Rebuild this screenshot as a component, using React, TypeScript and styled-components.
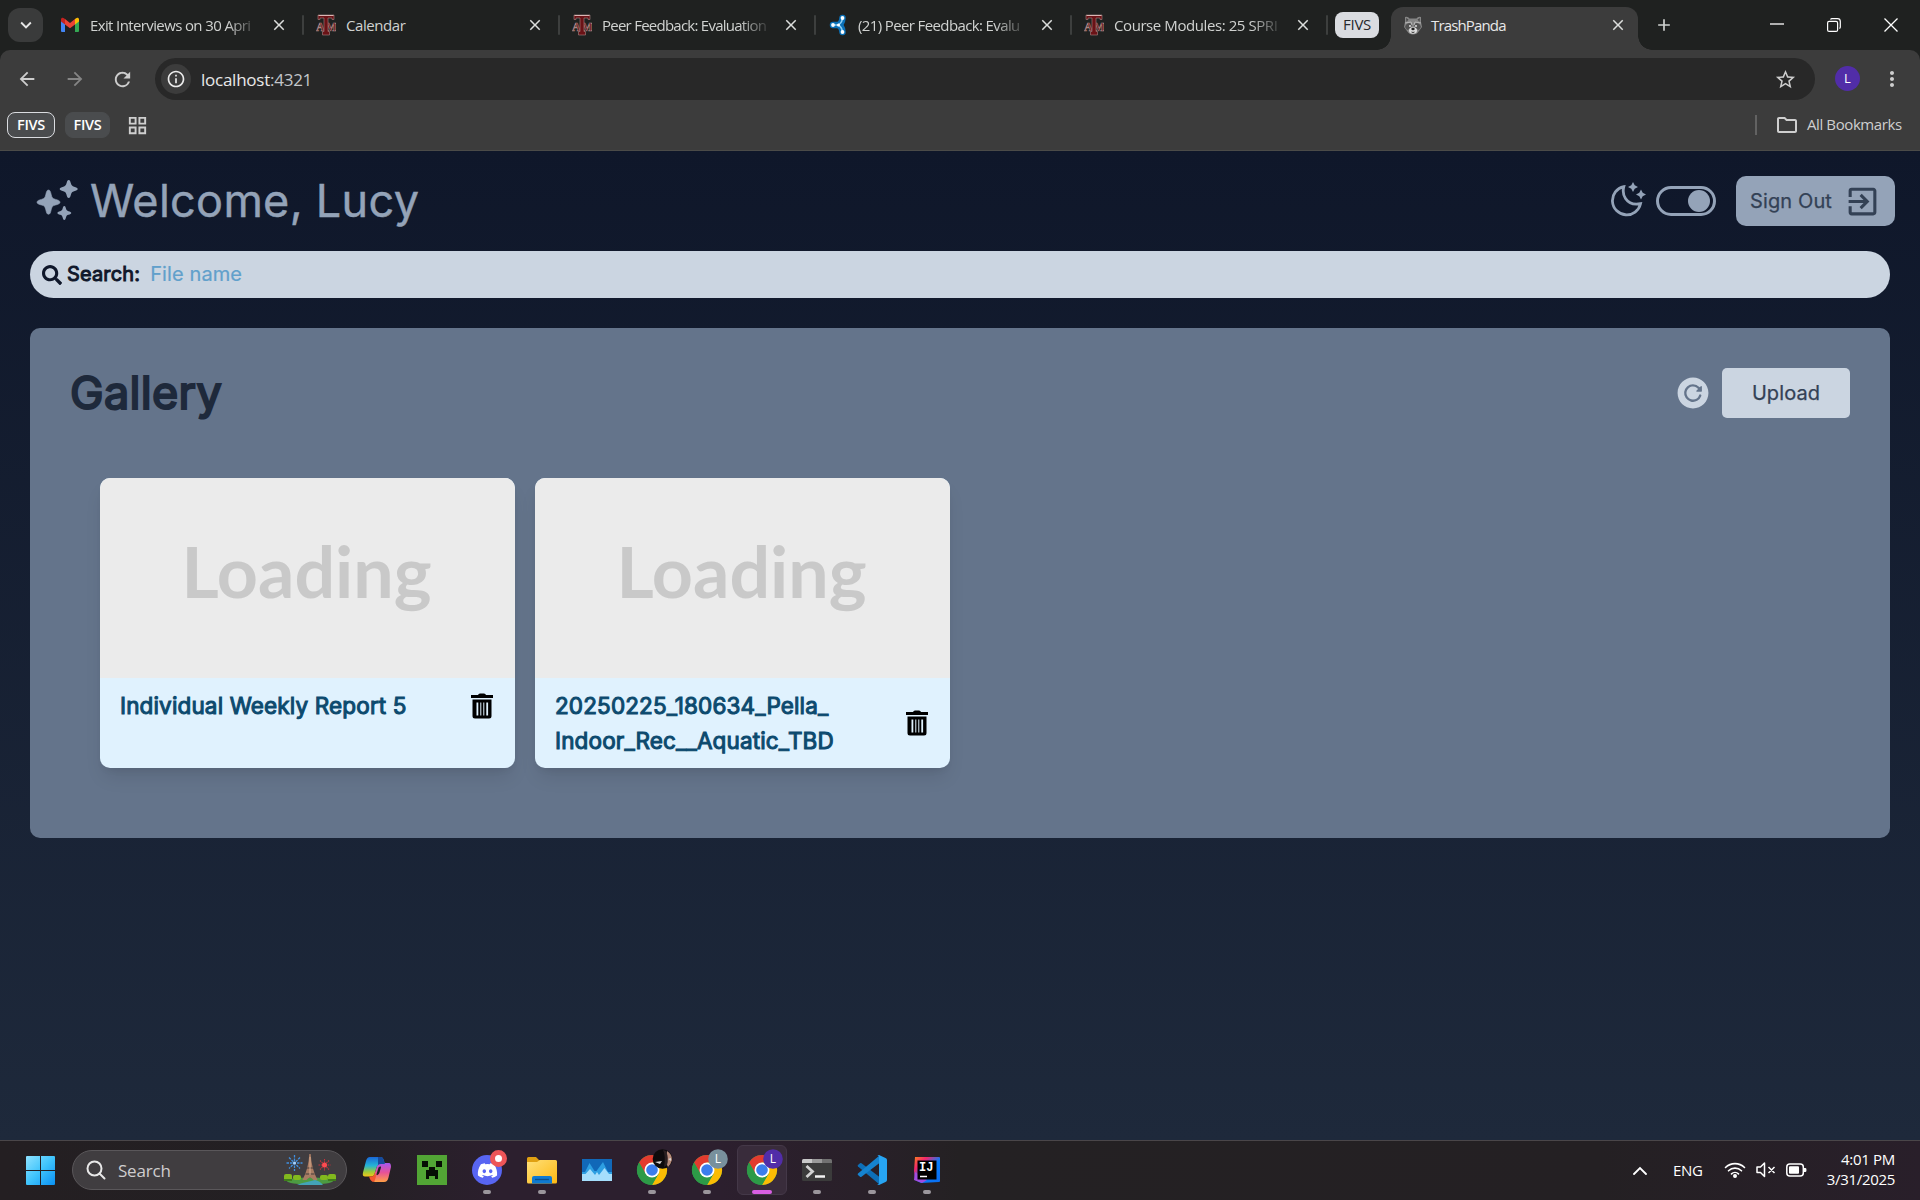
import React from "react";
import styled, { createGlobalStyle, css } from "styled-components";
import { MdArrowBack, MdArrowForward, MdRefresh, MdInfoOutline, MdStarOutline, MdOutlineFolder, MdGridView, MdExitToApp, MdKeyboardArrowDown, MdClose, MdAdd, MdMoreVert } from "react-icons/md";
import { FaSearch, FaDiscord } from "react-icons/fa";
import { IoReloadCircle } from "react-icons/io5";

const ui = `"Open Sans", "Noto Sans", sans-serif`;

const GlobalStyle = createGlobalStyle`
  *, *::before, *::after { box-sizing: border-box; }
  body { margin: 0; background: #0f172a; overflow: hidden; }
  svg { display: block; flex: none; }
  button { border: 0; padding: 0; background: none; color: inherit; font: inherit; }
`;

const Screen = styled.div`
  display: flex;
  flex-direction: column;
  width: 1920px;
  height: 1200px;
  overflow: hidden;
  font-family: ${ui};
`;

/* ---------- browser chrome ---------- */

const TabStrip = styled.div`
  display: flex;
  height: 50px;
  background: #1f2120;
  color: #d0d2d0;
`;

const TabSearch = styled.button`
  display: grid;
  place-items: center;
  width: 35px;
  height: 34px;
  margin: 8px 5px 0 8px;
  border-radius: 12px;
  background: #3a3b3b;
  color: #e6e6e6;
`;

const TabItem = styled.div`
  display: flex;
  align-items: center;
  width: 256px;
  height: 50px;
  padding-left: 12px;
`;

const TabLabel = styled.span<{ $fade?: boolean; $spacing?: number }>`
  flex: 1;
  margin-left: 10px;
  font-size: 15px;
  line-height: 20px;
  letter-spacing: ${(p) => p.$spacing ?? -0.4}px;
  white-space: nowrap;
  ${(p) => p.$fade && css`mask-image: linear-gradient(90deg, #000 82%, rgba(0, 0, 0, 0.15) 99%);`}
`;

const TabClose = styled.button`
  display: grid;
  place-items: center;
  width: 20px;
  height: 20px;
  margin: 0 13px 0 12px;
  color: #dcdedc;
`;

const TabDivider = styled.i`
  width: 2px;
  height: 20px;
  margin-top: -1px;
  border-radius: 1px;
  background: #3d3f3e;
`;

const GroupChip = styled.span`
  width: 44px;
  height: 26px;
  margin: 12px 12px 0 7px;
  border-radius: 8px;
  background: #dadce0;
  color: #26282b;
  font-size: 15px;
  line-height: 25px;
  text-align: center;
  letter-spacing: -0.3px;
`;

const ActiveTab = styled.div`
  position: relative;
  display: flex;
  align-items: center;
  width: 247px;
  height: 43px;
  margin-top: 7px;
  padding: 0 0 7px 13px;
  border-radius: 12px 12px 0 0;
  background: #3c3c3c;
  color: #e8e8e8;

  &::before,
  &::after {
    content: "";
    position: absolute;
    bottom: 0;
    width: 14px;
    height: 14px;
  }
  &::before {
    left: -14px;
    background: radial-gradient(circle at 0 0, transparent 13.5px, #3c3c3c 14px);
  }
  &::after {
    right: -14px;
    background: radial-gradient(circle at 100% 0, transparent 13.5px, #3c3c3c 14px);
  }
`;

const ActiveLabel = styled(TabLabel)`
  margin-left: 9px;
`;

const ActiveClose = styled(TabClose)`
  margin: 0 10px 0 8px;
`;

const NewTab = styled.button`
  display: grid;
  place-items: center;
  width: 34px;
  height: 34px;
  margin: 8px 0 0 9px;
`;

const WindowControls = styled.div`
  display: flex;
  margin: 0 1px 0 auto;
  height: 49px;
  color: #fff;
`;

const WindowButton = styled.button`
  display: grid;
  place-items: center;
  width: 57px;
`;

const ToolbarBack = styled.div`
  background: #1f2120;
`;

const Toolbar = styled.div`
  display: flex;
  flex-direction: column;
  height: 101px;
  border-bottom: 1px solid #4b4b48;
  border-radius: 10px 10px 0 0;
  background: #3c3c3c;
`;

const NavRow = styled.div`
  display: flex;
  align-items: center;
  height: 58px;
  padding-left: 16px;
  color: #cdcdcd;
`;

const NavButton = styled.button<{ $dim?: boolean; $gap: number }>`
  width: 22px;
  height: 22px;
  margin-right: ${(p) => p.$gap}px;
  color: ${(p) => (p.$dim ? "#858585" : "#cdcdcd")};
`;

const AddressBar = styled.div`
  display: flex;
  align-items: center;
  width: 1660px;
  height: 42px;
  padding: 0 18px 0 6px;
  border-radius: 21px;
  background: #282828;
`;

const SiteInfo = styled.span`
  display: grid;
  place-items: center;
  width: 30px;
  height: 30px;
  margin-right: 10px;
  border-radius: 50%;
  background: #3c3c3c;
  color: #ececec;
`;

const Address = styled.span`
  flex: 1;
  color: #e8e8e8;
  font-size: 17px;
  letter-spacing: -0.25px;
  b { font-weight: 400; color: #c3c6ca; }
`;

const Profile = styled.span`
  width: 25px;
  height: 25px;
  margin: 0 20px 1px 20px;
  border-radius: 50%;
  background: #512da8;
  color: #fff;
  font-size: 13px;
  line-height: 25px;
  text-align: center;
`;

const BookmarkRow = styled.div`
  display: flex;
  align-items: center;
  height: 34px;
  padding: 0 19px 0 7px;
  color: #cfcfcf;
`;

const BookmarkChip = styled.span<{ $outlined?: boolean }>`
  width: ${(p) => (p.$outlined ? 48 : 45)}px;
  height: 26px;
  margin-right: ${(p) => (p.$outlined ? 10 : 16)}px;
  border: 1px solid ${(p) => (p.$outlined ? "#dadce0" : "#4a4c4e")};
  border-radius: 8px;
  background: #4a4c4e;
  color: #fff;
  font-size: 14.5px;
  font-weight: 600;
  line-height: 24px;
  letter-spacing: -0.3px;
  text-align: center;
`;

const BookmarkDivider = styled.i`
  width: 2px;
  height: 20px;
  margin: 0 18px 0 auto;
  background: #626262;
`;

const AllBookmarks = styled.span`
  width: 94px;
  margin: 0 0 2px 8px;
  font-size: 15px;
  letter-spacing: -0.4px;
  white-space: nowrap;
`;

/* ---------- page ---------- */

const Page = styled.main`
  flex: 1;
  padding: 25px 25px 0 30px;
  background: linear-gradient(180deg, #0f172a, #1e293b);
  font-family: Inter, sans-serif;
`;

const Header = styled.header`
  display: flex;
  align-items: center;
  height: 50px;
  color: #94a3b8;
`;

const Greeting = styled.h1`
  margin: 0 auto 0 6px;
  font-size: 45px;
  font-weight: 400;
  line-height: 50px;
  letter-spacing: 0.3px;
  -webkit-text-stroke: 0.45px currentColor;
`;

const Toggle = styled.span`
  display: flex;
  align-items: center;
  justify-content: flex-end;
  width: 60px;
  height: 30px;
  margin: 0 20px 0 8px;
  padding-right: 3px;
  border: 3px solid #94a3b8;
  border-radius: 15px;
  &::after {
    content: "";
    width: 22px;
    height: 22px;
    border-radius: 50%;
    background: #94a3b8;
  }
`;

const SignOut = styled.button`
  display: flex;
  align-items: center;
  justify-content: space-between;
  width: 159px;
  height: 50px;
  padding: 0 14px 0 14px;
  border-radius: 10px;
  background: #94a3b8;
  color: #334155;
  font-size: 20px;
  letter-spacing: 0.12px;
  -webkit-text-stroke: 0.25px currentColor;
`;

const SearchBar = styled.label`
  display: flex;
  align-items: center;
  height: 47px;
  margin: 25px 5px 30px 0;
  padding-left: 12px;
  border-radius: 24px;
  background: #cbd5e1;
  color: #0f172a;
  font-size: 20px;
`;

const SearchLabel = styled.span`
  margin: 0 10px 2px 5px;
  letter-spacing: 0.15px;
  -webkit-text-stroke: 0.95px currentColor;
`;

const Placeholder = styled.span`
  margin-bottom: 2px;
  color: #61a0cb;
  letter-spacing: 0.1px;
  -webkit-text-stroke: 0.2px currentColor;
`;

const GalleryPanel = styled.section`
  height: 510px;
  margin-right: 5px;
  padding: 40px 40px 0;
  border-radius: 10px;
  background: #64748b;
`;

const GalleryHead = styled.div`
  display: flex;
  align-items: center;
  height: 50px;
`;

const GalleryTitle = styled.h2`
  margin: 0 auto 0 0;
  color: #1e293b;
  font-size: 45px;
  font-weight: 400;
  line-height: 50px;
  letter-spacing: 0.35px;
  -webkit-text-stroke: 2.1px currentColor;
`;

const RefreshButton = styled.button`
  margin-right: 10px;
  color: #cbd5e1;
`;

const UploadButton = styled.button`
  width: 128px;
  height: 50px;
  border-radius: 5px;
  background: #cbd5e1;
  color: #334155;
  font-size: 20px;
  letter-spacing: 0.1px;
  -webkit-text-stroke: 0.25px currentColor;
`;

const CardGrid = styled.div`
  display: grid;
  grid-template-columns: 415px 415px;
  gap: 20px;
  margin: 60px 0 0 30px;
`;

const Card = styled.article`
  height: 290px;
  border-radius: 10px;
  overflow: hidden;
  background: #e0f2fe;
  box-shadow: 0 12px 19px -4px rgba(0, 0, 0, 0.1), 0 5px 8px -5px rgba(0, 0, 0, 0.1);
`;

const Preview = styled.div`
  height: 200px;
  padding-right: 2px;
  background: #ebebeb;
  color: #c9c9c9;
  font: 700 71.7px/185px Lato, sans-serif;
  text-align: center;
`;

const CardInfo = styled.div`
  display: flex;
  align-items: center;
  justify-content: space-between;
  padding: 10px 21px 0 20px;
`;

const FileName = styled.h3`
  margin: 0;
  color: #0c4a6e;
  font-size: 22.5px;
  font-weight: 400;
  line-height: 35px;
  letter-spacing: 0.14px;
  white-space: pre-line;
  -webkit-text-stroke: 1.05px currentColor;
`;

/* ---------- taskbar ---------- */

const Taskbar = styled.footer`
  display: flex;
  align-items: center;
  height: 60px;
  padding: 0 25px 1px 26px;
  border-top: 1px solid #4a4649;
  background: linear-gradient(90deg, #241f22 0, #232023 350px, #2c1f2e 500px, #2c1f2e 720px, #292029 860px, #242123 960px, #242023 1600px, #291f2a 1920px);
  color: #fff;
`;

const TaskSearch = styled.div`
  display: flex;
  align-items: center;
  width: 275px;
  height: 40px;
  margin: 0 5px 0 17px;
  padding: 0 9px 0 13px;
  border: 1px solid #5a575a;
  border-radius: 20px;
  background: #403d40;
  color: #cfcdcf;
  font-size: 17px;
  letter-spacing: -0.2px;
`;

const TaskSearchText = styled.span`
  flex: 1;
  margin-left: 12px;
`;

const AppRow = styled.div`
  display: flex;
  gap: 5px;
`;

const AppSlot = styled.div<{ $active?: boolean }>`
  display: flex;
  flex-direction: column;
  align-items: center;
  width: 50px;
  height: 50px;
  padding-top: 5px;
  border: 1px solid ${(p) => (p.$active ? "#443848" : "transparent")};
  border-radius: 6px;
  background: ${(p) => (p.$active ? "#392c3b" : "transparent")};
`;

const AppGlyph = styled.div`
  height: 40px;
  padding-top: 3px;
`;

const RunningMark = styled.i<{ $active?: boolean }>`
  width: ${(p) => (p.$active ? 20 : 8)}px;
  height: 4px;
  margin-top: 1px;
  border-radius: 2px;
  background: ${(p) => (p.$active ? "#d85fe2" : "#9b969c")};
`;

const Tray = styled.div`
  display: flex;
  align-items: center;
  gap: 10px;
  margin-left: auto;
`;

const Language = styled.span`
  width: 30px;
  margin: 0 11px 1px 16px;
  font-size: 15px;
  letter-spacing: -0.3px;
`;

const Clock = styled.div`
  width: 69px;
  margin: 0 0 3px 9px;
  font-size: 15px;
  line-height: 20px;
  letter-spacing: -0.3px;
  text-align: right;
  white-space: nowrap;
`;

/* ---------- icons ---------- */

const GmailIcon = () => (
  <svg width="20" height="16" viewBox="0 0 20 16">
    <path d="M1 2v12q0 1 1 1h3V5z" fill="#4285f4" />
    <path d="M15 5v10h3q1 0 1-1V2z" fill="#34a853" />
    <path d="M1 4V2.500C1 .6 3 .5 4.300 1.500L5 2v5.500L1 4.600z" fill="#c5221f" />
    <path d="M15 7.500V2l.7-.5C17 .5 19 .6 19 2.500v2.100z" fill="#fbbc04" />
    <path d="M5 2l5 3.900L15 2v5.500l-5 3.800-5-3.800z" fill="#ea4335" />
  </svg>
);

const CampusIcon = () => (
  <svg width="20" height="22" viewBox="0 0 20 22" fontFamily="Liberation Serif" fontWeight="700" textAnchor="middle">
    <g fill="#6a1216" stroke="#a98584" strokeWidth=".6">
      <text x="4.200" y="17" fontSize="12">A</text>
      <text x="15.300" y="17" fontSize="11.500">M</text>
      <path d="M2 1h16v4.500h-2V4h-4v13.500h1.500V21h-7v-3.500H8V4H4v1.500H2z" />
    </g>
    <path d="M2.500 1.500h15" stroke="#d9b7b5" />
  </svg>
);

const NodesIcon = () => (
  <svg width="20" height="22" viewBox="-1 0 20 22">
    <g stroke="#0b70b7" strokeWidth="6.500" strokeLinecap="round" fill="none">
      <path d="M4 11h5M9 11q4-1 4.500-7M9 11q4 1 4.500 7" />
    </g>
    <path d="M4 11h5q4-2 4.500-7M9 11q4 2 4.500 7" stroke="#8fd0f5" strokeWidth="1.500" fill="none" />
    <g fill="#fff"><circle cx="4" cy="11" r="1.900" /><circle cx="13.500" cy="4" r="1.900" /><circle cx="13.500" cy="18" r="1.900" /><circle cx="9.500" cy="11" r="1.500" /></g>
  </svg>
);

const RaccoonIcon = () => (
  <svg width="18" height="19" viewBox="0 0 18 19">
    <path d="M1 1q3-1 4.500 1.500h7Q14 0 17 1v5l1 5-3 4q-2 3.500-6 3.500T3 15l-3-4 1-5z" fill="#858585" />
    <path d="M2 2l2.500 1.500L2.500 6zM16 2l-2.500 1.500L15.500 6z" fill="#4b4b4b" />
    <path d="M1 11q1-4 5-4l2 2-2 4-3 1zM17 11q-1-4-5-4l-2 2 2 4 3 1z" fill="#515151" />
    <path d="M1 7l6-1 1 3M17 7l-6-1-1 3" stroke="#b5b5b5" fill="none" />
    <circle cx="6" cy="10" r=".9" fill="#eee" /><circle cx="12" cy="10" r=".9" fill="#eee" />
    <ellipse cx="9" cy="14.500" rx="4" ry="3.200" fill="#dcdcdc" /><ellipse cx="9" cy="13" rx="1.700" ry="1.200" fill="#222" />
    <path d="M7.500 16q1.500 1 3 0" stroke="#333" fill="none" />
  </svg>
);

const SparklesIcon = () => (
  <svg width="54" height="50" viewBox="0 0 54 50" fill="#94a3b8">
    <path d="M18.500 14C20 14 20.500 15.500 21.200 18.500 21.900 21.500 22.500 22.600 25.600 23.400 28.500 24.200 30 24.800 30 26.200 30 27.600 28.500 28.200 25.600 29 22.500 29.700 21.900 30.800 21.200 33.800 20.500 36.800 20 38.300 18.500 38.300 17 38.300 16.500 36.800 15.800 33.800 15.100 30.800 14.500 29.700 11.400 29 8.500 28.200 7 27.600 7 26.200 7 24.800 8.500 24.200 11.400 23.400 14.500 22.600 15.100 21.500 15.800 18.500 16.500 15.500 17 14 18.500 14z" stroke="#94a3b8" strokeWidth=".6" />
    <path transform="translate(38.700 13) scale(.75)" d="M0-12C1.800-12 2.200-10 3-7.200 3.800-4.700 4.700-3.800 7.200-3 10-2.200 12-1.600 12 0S10 2.200 7.200 3C4.700 3.800 3.800 4.700 3 7.200 2.200 10 1.800 12 0 12S-2.200 10-3 7.200C-3.800 4.700-4.700 3.800-7.200 3-10 2.200-12 1.600-12 0S-10-2.200-7.200-3C-4.700-3.800-3.800-4.700-3-7.200-2.200-10-1.800-12 0-12z" />
    <path transform="translate(34.300 37) scale(.58)" d="M0-12C1.800-12 2.200-10 3-7.200 3.800-4.700 4.700-3.800 7.200-3 10-2.200 12-1.600 12 0S10 2.200 7.200 3C4.700 3.800 3.800 4.700 3 7.200 2.200 10 1.800 12 0 12S-2.200 10-3 7.200C-3.800 4.700-4.700 3.800-7.200 3-10 2.200-12 1.600-12 0S-10-2.200-7.200-3C-4.700-3.800-3.800-4.700-3-7.200-2.200-10-1.800-12 0-12z" />
  </svg>
);

const MoonIcon = () => (
  <svg width="37" height="50" viewBox="0 0 37 50">
    <path d="M12.800 10.700A14.200 14.200 0 1 0 29.500 27.700C23 29 17.500 27 14.500 22.500 12 18.800 11.700 15 12.800 10.700z" fill="none" stroke="#94a3b8" strokeWidth="2.800" />
    <path d="M22 6l1.700 3.300L27 11l-3.300 1.700L22 16l-1.700-3.300L17 11l3.300-1.700zM30 13.500l1.700 3.300 3.300 1.700-3.300 1.700-1.700 3.300-1.700-3.300-3.300-1.700 3.300-1.700z" fill="#94a3b8" />
  </svg>
);

const TrashIcon = () => (
  <svg width="24" height="26" viewBox="0 0 24 26">
    <path d="M1 2h7q.5-1.500 2-1.500h4q1.500 0 2 1.500h7v3H1z" />
    <path fillRule="evenodd" d="M2.500 6.500h19V23q0 2.500-2.500 2.500H5Q2.500 25.500 2.500 23zM6.500 9.500v13h1.800v-13zm3.800 0v13h1v-13zm3 0v13h1v-13zm3 0v13h1.800v-13z" />
  </svg>
);

const WindowsIcon = () => (
  <svg width="29" height="29" viewBox="0 0 29 29">
    <defs><linearGradient id="win" x2="1" y2="1"><stop stopColor="#8fe2ff" /><stop offset=".5" stopColor="#3fc4fc" /><stop offset="1" stopColor="#0a90f3" /></linearGradient></defs>
    <path d="M1 0h13v14H0V1q0-1 1-1zM15 0h13q1 0 1 1v13H15zM0 15h14v14H1q-1 0-1-1zM15 15h14v13q0 1-1 1H15z" fill="url(#win)" />
  </svg>
);

const ParisIcon = () => (
  <svg width="54" height="32" viewBox="0 0 54 32">
    <ellipse cx="27" cy="27" rx="23" ry="3.500" fill="#4d9b42" />
    <path d="M24 28q-6 1-10 3h26q-3-4-8-5z" fill="#43a3b7" />
    <g fill="#82b91e"><rect x="1" y="20" width="8" height="7" rx="2" /><rect x="10" y="21" width="8" height="5" rx="2" /><rect x="37" y="21" width="8" height="5" rx="2" /><rect x="45" y="20" width="8" height="7" rx="2" /></g>
    <path d="M1 25h8v2H1zM45 25h8v2h-8z" fill="#3f7d1b" />
    <path d="M26.300 0h1.400q.6 14 6.800 26h-4q-3.500-5-7 0h-4Q25.700 14 26.300 0z" fill="#a97c63" />
    <path d="M24 14h6M22.500 20h9" stroke="#66514a" strokeWidth="1.500" /><path d="M27 3v18" stroke="#d9ad90" strokeWidth="1" />
    <g stroke="#3f8fe0" strokeWidth="1.300" strokeDasharray="2.500 1"><path d="M11.500 1v16M3.500 9h16M6 3.500l11 11M17 3.500l-11 11" /></g>
    <circle cx="11.500" cy="9" r="1.500" fill="#a9d4ff" />
    <path d="M41.500 5v12M35.500 11h12M37 6.500l9 9M46 6.500l-9 9" stroke="#c9323b" strokeWidth="1.100" strokeDasharray="1.500 .8" /><circle cx="41.500" cy="11" r="2.500" fill="#ff4a50" />
  </svg>
);

const CopilotIcon = () => (
  <svg width="30" height="32" viewBox="0 0 30 32">
    <defs>
      <linearGradient id="cpA" x2="0" y2="1"><stop stopColor="#1a67d8" /><stop offset=".45" stopColor="#25b4d6" /><stop offset=".75" stopColor="#9acb3c" /><stop offset="1" stopColor="#f5c518" /></linearGradient>
      <linearGradient id="cpB" x2="0" y2="1"><stop stopColor="#a557f0" /><stop offset=".5" stopColor="#e75298" /><stop offset="1" stopColor="#ff9f45" /></linearGradient>
    </defs>
    <path fillRule="evenodd" d="M19 9h8q2 0 2 4l-2.500 10.500Q25.500 28 22 28h-9q-2 0-2-3L15 12q1-3 4-3zM16.500 13.500L14.500 20q-.3 1.500 1 1 1.500-.6 2-2.500l1.500-5q.3-1.500-1-1-1 .3-1.500 1z" fill="url(#cpB)" />
    <path d="M8 3h11q2 0 3 4l.8 3H18q-2.500 0-3.500 3.500L12.500 20q-.8 2.500-3 2.500H3q-3 0-2-4L4 7q1-4 4-4z" fill="url(#cpA)" />
    <path d="M7 22.500h2.500q2.200 0 3-2.500l.5-1.500 1 3.500-1 4q-.6 2-2 2-2.500-.8-4-5.500z" fill="#f4572e" />
    <path d="M16 3h3q2 0 3 4l.8 3H19q-2 0-3 1z" fill="#174b9d" />
  </svg>
);

const CreeperIcon = () => (
  <svg width="30" height="32" viewBox="0 0 30 32">
    <path d="M0 1h30v30H0z" fill="#52a535" />
    <path d="M5 7h6v6H5zM19 7h6v6h-6zM12 13h6v3h3v9h-3v-3h-6v3H9v-9h3z" fill="#060d04" />
  </svg>
);

const DiscordBubble = styled.span`
  position: relative;
  display: grid;
  place-items: center;
  width: 30px;
  height: 30px;
  margin: 1px 0;
  border-radius: 50%;
  background: #5865f2;
  color: #fff;
  &::after {
    content: "";
    position: absolute;
    top: -5px;
    right: -5px;
    width: 17px;
    height: 17px;
    border: 5px solid #ed5558;
    border-radius: 50%;
    background: #fff;
  }
`;

const FolderIcon = () => (
  <svg width="30" height="32" viewBox="0 0 30 32">
    <defs><linearGradient id="fold" x2="1" y2="1"><stop stopColor="#ffe07a" /><stop offset="1" stopColor="#fdb912" /></linearGradient></defs>
    <path d="M0 4.500Q0 3 1.500 3H9l3 3h1v6H0z" fill="#e0a012" />
    <path d="M0 8h10l3-2h15.500Q30 6 30 7.500V28q0 1.500-1.500 1.500h-27Q0 29.500 0 28z" fill="url(#fold)" />
    <path d="M5 29.500V24q0-2 2-2h16q2 0 2 2v5.500z" fill="#0f7ad1" /><path d="M8 25.500h14" stroke="#0b4f8c" strokeWidth="1.300" />
  </svg>
);

const MonitorIcon = () => (
  <svg width="30" height="32" viewBox="0 0 30 32">
    <path d="M0 5h30v22H0z" fill="#1168b8" />
    <path d="M0 18h3l4.500-9 5 8 2 0 6.500-9 5 10h4v9H0z" fill="#2d9fe2" />
    <path d="M0 20h3.500l4.500-5 5 6 2-3 2 3 5.500-7L27 20h3v7H0z" fill="#a5defc" />
  </svg>
);

const BadgeText = styled.text`
  font-family: ${ui};
  font-size: 12px;
  fill: #fff;
`;

const BadgedSvg = styled.svg`
  margin-top: -6px;
`;

const ChromeIcon = ({ badge }: { badge: "photo" | "grey" | "purple" }) => (
  <BadgedSvg width="44" height="38" viewBox="-7 -6 44 38">
    <circle cx="15" cy="16" r="15" fill="#34a853" />
    <path d="M2 8.500A15 15 0 0 1 28 8.500H15L8.500 19.800z" fill="#e33b2e" />
    <path d="M28 8.500A15 15 0 0 1 15 31L21.500 19.800 15 8.500z" fill="#fbbc04" />
    <path d="M2 8.500A15 15 0 0 0 15 31L21.500 19.800 8.500 19.800z" fill="#2d9a47" />
    <circle cx="15" cy="16" r="7.500" fill="#fff" /><circle cx="15" cy="16" r="5.800" fill="#3b7ded" />
    {badge === "photo" ? (
      <g>
        <circle cx="25.500" cy="5" r="9.800" fill="#0d0b0c" />
        <path d="M30-3q5 3 5 9-1 4-4 7-2-3-2-8z" fill="#b58a78" />
        <path d="M31 5l3-1v3zM18 8l7-1-2 3z" fill="#d8d3d2" /><path d="M26-4q3 6 1 17l3-2q2-7-1-14z" fill="#2a2021" />
      </g>
    ) : (
      <g>
        <circle cx="26" cy="5" r="9.800" fill={badge === "grey" ? "#78909c" : "#512da8"} />
        <BadgeText x="26" y="9.300" textAnchor="middle">L</BadgeText>
      </g>
    )}
  </BadgedSvg>
);

const TerminalIcon = () => (
  <svg width="30" height="32" viewBox="0 0 30 32">
    <rect y="5" width="30" height="22" rx="1.500" fill="#3b3b3b" />
    <path d="M0 9V6.500Q0 5 1.500 5H10v4z" fill="#c9c9c9" /><path d="M10 5h10v4H10z" fill="#9a9a9a" /><path d="M20 5h8.500Q30 5 30 6.500V9H20z" fill="#717171" />
    <path d="M4.500 12l6 5.500-6 5.500" stroke="#d2d2d2" strokeWidth="2.800" fill="none" /><path d="M13 22.500h10" stroke="#f2f2f2" strokeWidth="2.500" />
  </svg>
);

const CodeIcon = () => (
  <svg width="30" height="32" viewBox="0 0 30 32">
    <path d="M1 11l2-1.700q.7-.5 1.500 0L22.500 23v7.500L1 12.500q-.8-.8 0-1.500z" fill="#0d6fb8" />
    <path d="M1 21l2 1.700q.7.500 1.500 0L22.500 9V1.500L1 19.500q-.8.800 0 1.500z" fill="#1583d0" />
    <path d="M22 1l6.500 3q1.500.7 1.500 2v20q0 1.300-1.500 2L22 31q-1 .3-1.800-.6 1.300.6 1.800-.9V2.500q-.5-1.500-1.800-.9Q21 .7 22 1z" fill="#27a4f2" />
  </svg>
);

const IdeIcon = () => (
  <svg width="28" height="32" viewBox="0 0 28 32">
    <defs><linearGradient id="ide" x2="1" y2="1"><stop stopColor="#fc801d" /><stop offset=".25" stopColor="#f4266c" /><stop offset=".55" stopColor="#087cfa" /><stop offset="1" stopColor="#0a6df0" /></linearGradient></defs>
    <path d="M2 3h24q1 0 1 1v23q0 1-1 1l-18 1-6-3L1 17z" fill="url(#ide)" /><path d="M2 18l-1 8 8 3 5-3z" fill="#a14ce0" />
    <path d="M4.500 6.500h19v19h-19z" fill="#000" />
    <text x="6" y="16.500" fontFamily="Liberation Mono" fontWeight="700" fontSize="12" fill="#fff">IJ</text>
    <path d="M7 22.500h7" stroke="#fff" strokeWidth="1.500" />
  </svg>
);

const WifiIcon = () => (
  <svg width="22" height="18" viewBox="0 0 22 18" fill="none" stroke="#fff" strokeWidth="1.600" strokeLinecap="round">
    <path d="M1.500 6.500a13.500 13.500 0 0 1 19 0M4.500 9.800a9.300 9.300 0 0 1 13 0M7.500 12.900a5 5 0 0 1 7 0" />
    <circle cx="11" cy="15" r="1.200" fill="#fff" />
  </svg>
);

const MuteIcon = () => (
  <svg width="20" height="18" viewBox="0 0 20 18" fill="none" stroke="#fff" strokeWidth="1.500" strokeLinejoin="round">
    <path d="M1 6h3.500l4-4v13.500l-4-4H1zM12.500 6l6 6M18.500 6l-6 6" />
  </svg>
);

const BatteryIcon = () => (
  <svg width="21" height="14" viewBox="0 0 21 14">
    <rect x=".8" y="1" width="16.500" height="12" rx="3" fill="none" stroke="#fff" strokeWidth="1.500" />
    <rect x="3" y="3.200" width="10" height="7.600" rx="1" fill="#fff" /><path d="M18 5h1.500q1 0 1 2t-1 2H18z" fill="#fff" />
  </svg>
);

/* ---------- data ---------- */

const tabs = [
  { title: "Exit Interviews on 30 Apri", icon: <GmailIcon />, fade: true, spacing: -0.62 },
  { title: "Calendar", icon: <CampusIcon />, fade: false, spacing: -0.42 },
  { title: "Peer Feedback: Evaluation", icon: <CampusIcon />, fade: true, spacing: -0.75 },
  { title: "(21) Peer Feedback: Evalu", icon: <NodesIcon />, fade: true, spacing: -0.62 },
  { title: "Course Modules: 25 SPRI", icon: <CampusIcon />, fade: true, spacing: -0.42 },
];

const files = ["Individual Weekly Report 5", "20250225_180634_Pella_\nIndoor_Rec__Aquatic_TBD"];

const apps: { icon: React.ReactNode; running?: boolean; active?: boolean }[] = [
  { icon: <CopilotIcon /> },
  { icon: <CreeperIcon /> },
  { icon: <DiscordBubble><FaDiscord size={21} /></DiscordBubble>, running: true },
  { icon: <FolderIcon />, running: true },
  { icon: <MonitorIcon /> },
  { icon: <ChromeIcon badge="photo" />, running: true },
  { icon: <ChromeIcon badge="grey" />, running: true },
  { icon: <ChromeIcon badge="purple" />, running: true, active: true },
  { icon: <TerminalIcon />, running: true },
  { icon: <CodeIcon />, running: true },
  { icon: <IdeIcon />, running: true },
];

export default function App() {
  return (
    <Screen>
      <GlobalStyle />
      <TabStrip>
        <TabSearch><MdKeyboardArrowDown size={22} /></TabSearch>
        {tabs.map((t) => (
          <TabItem key={t.title}>
            {t.icon}
            <TabLabel $fade={t.fade} $spacing={t.spacing}>{t.title}</TabLabel>
            <TabClose><MdClose size={18} /></TabClose>
            <TabDivider />
          </TabItem>
        ))}
        <GroupChip>FIVS</GroupChip>
        <ActiveTab>
          <RaccoonIcon />
          <ActiveLabel $spacing={-0.85}>TrashPanda</ActiveLabel>
          <ActiveClose><MdClose size={18} /></ActiveClose>
        </ActiveTab>
        <NewTab><MdAdd size={20} /></NewTab>
        <WindowControls>
          <WindowButton><svg width="14" height="14"><path d="M0 6h14" stroke="#fff" strokeWidth="1.300" /></svg></WindowButton>
          <WindowButton>
            <svg width="14" height="14" fill="none" stroke="#fff" strokeWidth="1.200">
              <rect x=".6" y="3.400" width="10" height="10" rx="1.500" /><path d="M3.500 1.500Q4 .7 5 .7h5.500q2.800 0 2.800 2.800V9q0 1-.9 1.500" />
            </svg>
          </WindowButton>
          <WindowButton><svg width="14" height="14"><path d="M.5.5l13 13M13.500.5l-13 13" stroke="#fff" strokeWidth="1.300" /></svg></WindowButton>
        </WindowControls>
      </TabStrip>
      <ToolbarBack>
        <Toolbar>
          <NavRow>
            <NavButton $gap={26}><MdArrowBack size={22} /></NavButton>
            <NavButton $dim $gap={25}><MdArrowForward size={22} /></NavButton>
            <NavButton $gap={22}><MdRefresh size={23} /></NavButton>
            <AddressBar>
              <SiteInfo><MdInfoOutline size={20} /></SiteInfo>
              <Address>localhost<b>:4321</b></Address>
              <MdStarOutline size={23} />
            </AddressBar>
            <Profile>L</Profile>
            <MdMoreVert size={24} />
          </NavRow>
          <BookmarkRow>
            <BookmarkChip $outlined>FIVS</BookmarkChip>
            <BookmarkChip>FIVS</BookmarkChip>
            <MdGridView size={23} />
            <BookmarkDivider />
            <MdOutlineFolder size={24} />
            <AllBookmarks>All Bookmarks</AllBookmarks>
          </BookmarkRow>
        </Toolbar>
      </ToolbarBack>

      <Page>
        <Header>
          <SparklesIcon />
          <Greeting>Welcome, Lucy</Greeting>
          <MoonIcon />
          <Toggle />
          <SignOut>Sign Out <MdExitToApp size={37} /></SignOut>
        </Header>
        <SearchBar>
          <FaSearch size={20} />
          <SearchLabel>Search:</SearchLabel>
          <Placeholder>File name</Placeholder>
        </SearchBar>
        <GalleryPanel>
          <GalleryHead>
            <GalleryTitle>Gallery</GalleryTitle>
            <RefreshButton><IoReloadCircle size={38} /></RefreshButton>
            <UploadButton>Upload</UploadButton>
          </GalleryHead>
          <CardGrid>
            {files.map((name) => (
              <Card key={name}>
                <Preview>Loading</Preview>
                <CardInfo>
                  <FileName>{name}</FileName>
                  <TrashIcon />
                </CardInfo>
              </Card>
            ))}
          </CardGrid>
        </GalleryPanel>
      </Page>

      <Taskbar>
        <WindowsIcon />
        <TaskSearch>
          <svg width="20" height="20" viewBox="0 0 20 20" fill="none" stroke="#e8e8e8" strokeWidth="2" strokeLinecap="round"><circle cx="8.500" cy="8.500" r="7" /><path d="M13.500 13.500l5 5" /></svg>
          <TaskSearchText>Search</TaskSearchText>
          <ParisIcon />
        </TaskSearch>
        <AppRow>
          {apps.map((a, i) => (
            <AppSlot key={i} $active={a.active}>
              <AppGlyph>{a.icon}</AppGlyph>
              {a.running && <RunningMark $active={a.active} />}
            </AppSlot>
          ))}
        </AppRow>
        <Tray>
          <svg width="14" height="9" fill="none" stroke="#fff" strokeWidth="1.800" strokeLinecap="round"><path d="M1 8l6-6 6 6" /></svg>
          <Language>ENG</Language>
          <WifiIcon />
          <MuteIcon />
          <BatteryIcon />
          <Clock>4:01 PM<br />3/31/2025</Clock>
        </Tray>
      </Taskbar>
    </Screen>
  );
}
